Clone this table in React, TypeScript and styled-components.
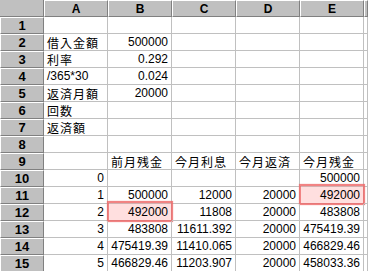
import React from 'react';
import styled, { createGlobalStyle } from 'styled-components';

const GlobalStyle = createGlobalStyle`
  body {
    margin: 0;
    background: #fff;
    overflow: hidden;
  }
`;

const Sheet = styled.div`
  display: grid;
  grid-template-columns: 44px repeat(5, 64px) 1fr;
  grid-auto-rows: 17px;
  width: 368px;
  height: 271px;
  overflow: hidden;
  font-family: "Liberation Sans", "Noto Sans CJK JP", sans-serif;
  font-size: 12px;
  color: #000;
`;

const Corner = styled.div`
  background: #c0c0c0;
  border-right: 1px solid #808080;
  border-bottom: 1px solid #808080;
`;

const ColHead = styled.div`
  background: #c0c0c0;
  border-top: 1px solid #fff;
  border-left: 1px solid #fff;
  border-right: 1px solid #808080;
  border-bottom: 1px solid #808080;
  display: flex;
  align-items: center;
  justify-content: center;
  font-weight: bold;
  font-size: 12px;
`;

const RowHead = styled(ColHead)`
  font-size: 13px;
`;

const Cell = styled.div<{ $num?: boolean; $jp?: boolean }>`
  position: relative;
  border-right: 1px solid #c0c0c0;
  border-bottom: 1px solid #c0c0c0;
  display: flex;
  align-items: center;
  justify-content: ${p => (p.$num ? 'flex-end' : 'flex-start')};
  padding: ${p => (p.$num ? '0 3px 0 0' : '0 0 0 3px')};
  letter-spacing: ${p => (p.$jp ? '1px' : '0')};
  white-space: nowrap;
  overflow: visible;
`;

const Mark = styled.span`
  position: absolute;
  left: -1px;
  right: -2px;
  top: -3px;
  bottom: -2px;
  background: rgba(255, 140, 140, 0.28);
  border: 2px solid rgba(236, 100, 100, 0.75);
  box-shadow: 0 0 1px rgba(236, 100, 100, 0.6);
  pointer-events: none;
`;

const Txt = styled.span`
  position: relative;
`;

type Val = string | number | null;

const rows: Val[][] = [
  [null, null, null, null, null],
  ['借入金額', 500000, null, null, null],
  ['利率', 0.292, null, null, null],
  ['/365*30', 0.024, null, null, null],
  ['返済月額', 20000, null, null, null],
  ['回数', null, null, null, null],
  ['返済額', null, null, null, null],
  [null, null, null, null, null],
  [null, '前月残金', '今月利息', '今月返済', '今月残金'],
  [0, null, null, null, 500000],
  [1, 500000, 12000, 20000, 492000],
  [2, 492000, 11808, 20000, 483808],
  [3, 483808, 11611.392, 20000, 475419.39],
  [4, 475419.39, 11410.065, 20000, 466829.46],
  [5, 466829.46, 11203.907, 20000, 458033.36],
];

// highlighted cells: [row, col]
const marked = ['11-4', '12-1'];

const cols = ['A', 'B', 'C', 'D', 'E'];

const App: React.FC = () => {
  return (
    <>
      <GlobalStyle />
      <Sheet>
        <Corner />
        {cols.map(c => (
          <ColHead key={c}>{c}</ColHead>
        ))}
        <ColHead />
        {rows.map((row, ri) => (
          <React.Fragment key={ri}>
            <RowHead>{ri + 1}</RowHead>
            {row.map((v, ci) => {
              const num = typeof v === 'number';
              const jp = typeof v === 'string' && /[^\x00-\x7f]/.test(v);
              const isMarked = marked.includes(`${ri + 1}-${ci}`);
              return (
                <Cell key={ci} $num={num} $jp={jp}>
                  {isMarked && <Mark />}
                  {v !== null && <Txt>{v}</Txt>}
                </Cell>
              );
            })}
            <Cell />
          </React.Fragment>
        ))}
      </Sheet>
    </>
  );
};

export default App;
